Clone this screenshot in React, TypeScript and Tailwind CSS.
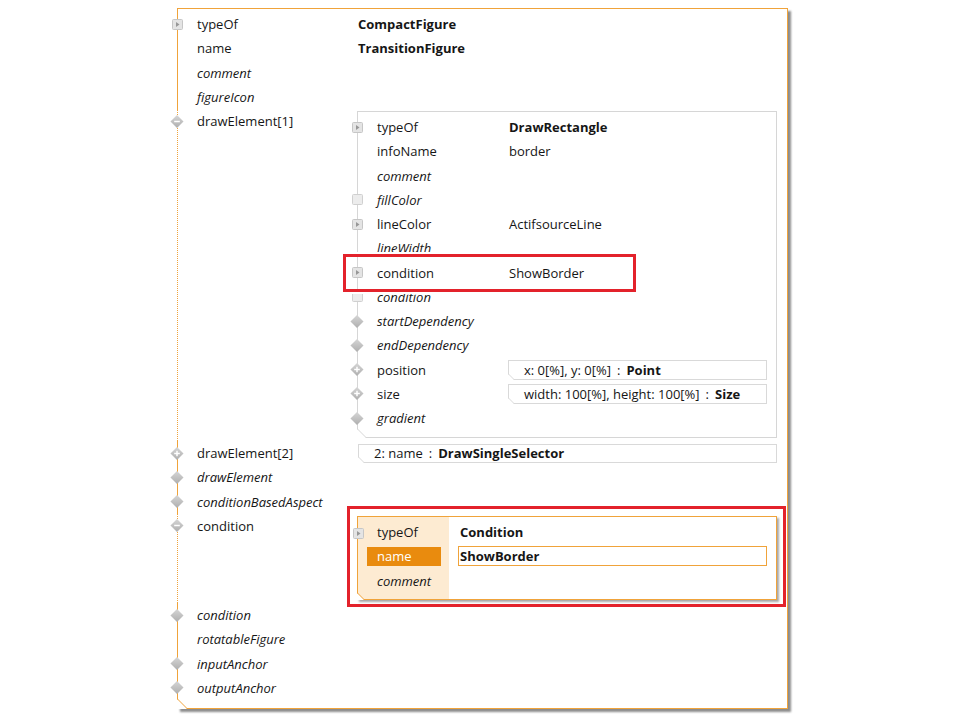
import React, { useId } from 'react';

// --- small icons sitting on the tree lines ---

function ExpandIcon() {
  return (
    <svg width="11" height="11" viewBox="0 0 11 11">
      <rect x="0.5" y="0.5" width="10" height="10" rx="1" fill="#e4e4e4" stroke="#c6c6c6" />
      <path d="M4 3 L7.5 5.5 L4 8 Z" fill="#979797" />
    </svg>
  );
}

function SquareIcon() {
  return (
    <svg width="11" height="11" viewBox="0 0 11 11">
      <rect x="0.5" y="0.5" width="10" height="10" rx="1" fill="#ececec" stroke="#d0d0d0" />
    </svg>
  );
}

function Diamond({ sign }: { sign?: '+' | '-' }) {
  const id = useId();
  return (
    <svg width="15" height="15" viewBox="0 0 15 15">
      <defs>
        <linearGradient id={id} x1="0" y1="0" x2="0" y2="1">
          <stop offset="0" stopColor="#d6d6d6" />
          <stop offset="1" stopColor="#aeaeae" />
        </linearGradient>
      </defs>
      <path d="M7.5 0.5 L14.5 7.5 L7.5 14.5 L0.5 7.5 Z" fill={`url(#${id})`} />
      {sign && <path d="M4.5 7.5 H10.5" stroke="#fff" strokeWidth="1.6" />}
      {sign === '+' && <path d="M7.5 4.5 V10.5" stroke="#fff" strokeWidth="1.6" />}
    </svg>
  );
}

// cut-off bottom left corner of the boxes
function Chamfer({ size, stroke, fill = '#fff' }: { size: number; stroke: string; fill?: string }) {
  return (
    <svg className="absolute -left-px -bottom-px" width={size} height={size} viewBox={`0 0 ${size} ${size}`}>
      <path d={`M0 0 L0 ${size} L${size} ${size} Z`} fill={fill} />
      <path d={`M0.5 0 L${size} ${size - 0.5}`} stroke={stroke} strokeWidth="1" />
    </svg>
  );
}

function IconSlot({ icon }: { icon?: React.ReactNode }) {
  if (!icon) return null;
  return (
    <span className="absolute -left-[8px] top-[5px] z-10 flex h-[14px] w-[14px] items-center justify-center">
      {icon}
    </span>
  );
}

type RowProps = {
  icon?: React.ReactNode;
  label: string;
  italic?: boolean;
  bold?: boolean;
  value?: React.ReactNode;
  children?: React.ReactNode;
  dotted?: boolean;
  overlay?: React.ReactNode;
};

function OuterRow({ icon, label, italic, bold, value, children, dotted, overlay }: RowProps) {
  return (
    <div
      className={`relative grid grid-cols-[161px_1fr] border-l border-[#f0a33a] pl-[19px] ${
        dotted ? 'border-dotted' : 'border-solid'
      }`}
    >
      <IconSlot icon={icon} />
      <div className={`h-[24.25px] leading-[24.25px] ${italic ? 'italic' : ''}`}>{label}</div>
      <div className="min-w-0">
        {children ?? (
          <div className={`h-[24.25px] leading-[24.25px] ${bold ? 'font-bold' : ''}`}>{value}</div>
        )}
      </div>
      {overlay}
    </div>
  );
}

function InnerRow({ icon, label, italic, bold, value, children, overlay }: RowProps) {
  return (
    <div className="relative grid grid-cols-[132px_1fr] pl-[19px]">
      <IconSlot icon={icon} />
      <div className={`h-[24.25px] leading-[24.25px] ${italic ? 'italic' : ''}`}>{label}</div>
      <div className="flex min-w-0 items-center">
        {children ?? (
          <div className={`h-[24.25px] leading-[24.25px] ${bold ? 'font-bold' : ''}`}>{value}</div>
        )}
      </div>
      {overlay}
    </div>
  );
}

function ValueBox({ text, type }: { text: string; type: string }) {
  return (
    <div className="relative -ml-px mr-[9px] h-[20px] flex-1 border border-[#d9d9d9] pl-[15px] leading-[18px]">
      {text}
      <span className="mx-[6px]">:</span>
      <span className="font-bold">{type}</span>
      <Chamfer size={6} stroke="#d9d9d9" />
    </div>
  );
}

function DrawRectangleBox() {
  return (
    <div className="relative -ml-px mr-[10px] mt-[2px] mb-[2.75px] border border-[#d6d6d6] pt-[3px] pb-[7px]">
      <InnerRow icon={<ExpandIcon />} label="typeOf" value="DrawRectangle" bold />
      <InnerRow label="infoName" value="border" />
      <InnerRow label="comment" italic />
      <InnerRow icon={<SquareIcon />} label="fillColor" italic />
      <InnerRow icon={<ExpandIcon />} label="lineColor" value="ActifsourceLine" />
      <InnerRow label="lineWidth" italic />
      <InnerRow
        icon={<ExpandIcon />}
        label="condition"
        value="ShowBorder"
        overlay={
          <div className="pointer-events-none absolute -left-[15px] -top-[6.5px] z-20 h-[38px] w-[293px] border-[3px] border-[#e3222b] shadow-[0_0_0_2px_#fff]" />
        }
      />
      <InnerRow icon={<SquareIcon />} label="condition" italic />
      <InnerRow icon={<Diamond />} label="startDependency" italic />
      <InnerRow icon={<Diamond />} label="endDependency" italic />
      <InnerRow icon={<Diamond sign="+" />} label="position">
        <ValueBox text="x: 0[%], y: 0[%]" type="Point" />
      </InnerRow>
      <InnerRow icon={<Diamond sign="+" />} label="size">
        <ValueBox text="width: 100[%], height: 100[%]" type="Size" />
      </InnerRow>
      <InnerRow icon={<Diamond />} label="gradient" italic />
      <Chamfer size={9} stroke="#d6d6d6" />
    </div>
  );
}

function CollapsedBox() {
  return (
    <div className="relative mr-[10px] mt-[2.5px] h-[19px] border border-[#d9d9d9] pl-[15px] leading-[17px]">
      2: name
      <span className="mx-[6px]">:</span>
      <span className="font-bold">DrawSingleSelector</span>
      <Chamfer size={6} stroke="#d9d9d9" />
    </div>
  );
}

function ConditionBox() {
  return (
    <div className="relative -ml-px mr-[10px] mt-[2.25px] mb-[3px] flex border border-[#f0a33a] shadow-[2px_2px_2px_rgba(0,0,0,0.35)]">
      <div className="relative w-[91px] bg-[#fdebd2] pt-[3px] pb-[6.25px]">
        <span className="absolute -left-[7px] top-[9px] z-10 flex h-[14px] w-[14px] items-center justify-center">
          <ExpandIcon />
        </span>
        <div className="h-[24.25px] pl-[19px] leading-[24.25px]">typeOf</div>
        <div className="flex h-[24.25px] items-center">
          <div className="ml-[9px] h-[19px] w-[74px] bg-[#e98b0e] pl-[10px] leading-[19px] text-white">name</div>
        </div>
        <div className="h-[24.25px] pl-[19px] italic leading-[24.25px]">comment</div>
      </div>
      <div className="flex-1 pt-[3px] pl-[9px] pr-[9px]">
        <div className="h-[24.25px] pl-[2px] font-bold leading-[24.25px]">Condition</div>
        <div className="flex h-[24.25px] items-center">
          <div className="h-[20px] flex-1 border border-[#f0a33a] pl-[1px] font-bold leading-[18px]">ShowBorder</div>
        </div>
      </div>
      <Chamfer size={7} stroke="#f0a33a" />
    </div>
  );
}

export default function App() {
  return (
    <div className="min-h-[720px] bg-white pt-[8px] font-['Open_Sans','Noto_Sans',sans-serif] text-[13px] text-[#161616]">
      <div className="relative ml-[177px] w-[611px] border-t border-r border-b border-[#f0a33a] bg-white shadow-[3px_3px_2px_rgba(0,0,0,0.45)]">
        <div className="h-[3px] border-l border-[#f0a33a]" />

        <OuterRow icon={<ExpandIcon />} label="typeOf" value="CompactFigure" bold />
        <OuterRow label="name" value="TransitionFigure" bold />
        <OuterRow label="comment" italic />
        <OuterRow label="figureIcon" italic />
        <OuterRow icon={<Diamond sign="-" />} label="drawElement[1]" dotted>
          <DrawRectangleBox />
        </OuterRow>
        <OuterRow icon={<Diamond sign="+" />} label="drawElement[2]">
          <CollapsedBox />
        </OuterRow>
        <OuterRow icon={<Diamond />} label="drawElement" italic />
        <OuterRow icon={<Diamond />} label="conditionBasedAspect" italic />
        <OuterRow
          icon={<Diamond sign="-" />}
          label="condition"
          dotted
          overlay={
            <div className="pointer-events-none absolute left-[169px] -top-[7.75px] z-20 h-[101px] w-[439px] border-[3px] border-[#e3222b]" />
          }
        >
          <ConditionBox />
        </OuterRow>
        <OuterRow icon={<Diamond />} label="condition" italic />
        <OuterRow label="rotatableFigure" italic />
        <OuterRow icon={<Diamond />} label="inputAnchor" italic />
        <OuterRow icon={<Diamond />} label="outputAnchor" italic />

        <div className="relative h-[8px] border-l border-[#f0a33a]">
          <Chamfer size={10} stroke="#f0a33a" />
        </div>
      </div>
    </div>
  );
}
